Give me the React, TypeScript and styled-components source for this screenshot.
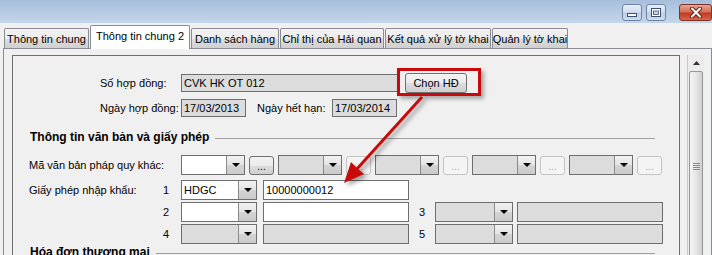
import styled, { createGlobalStyle } from "styled-components";

const GlobalStyle = createGlobalStyle`
  html, body {
    margin: 0;
    padding: 0;
  }
  body {
    width: 712px;
    height: 255px;
    overflow: hidden;
    background: #f0f0f0;
    font-family: "Liberation Sans", Arial, sans-serif;
    font-size: 11px;
    color: #000;
  }
`;

const tabs = [
  { label: "Thông tin chung", width: 85 },
  { label: "Thông tin chung 2", width: 100, active: true },
  { label: "Danh sách hàng", width: 88 },
  { label: "Chỉ thị của Hải quan", width: 104 },
  { label: "Kết quả xử lý tờ khai", width: 106 },
  { label: "Quản lý tờ khai", width: 76 },
];

const Window = styled.div`
  position: relative;
  width: 712px;
  height: 255px;
  overflow: hidden;
  background: #f0f0f0;
`;

const TitleBar = styled.div`
  height: 23px;
  background: linear-gradient(#a7bedb, #c4d6eb);
  display: flex;
  justify-content: flex-end;
  align-items: flex-start;
  padding-top: 4px;
  box-sizing: border-box;
  gap: 4px;
`;

const CaptionButton = styled.div<{ $close?: boolean; $w: number; $ml?: number }>`
  width: ${(p) => p.$w}px;
  height: 17px;
  box-sizing: border-box;
  border: 1px solid ${(p) => (p.$close ? "#7d3326" : "#6f84a3")};
  border-radius: 3px;
  margin-left: ${(p) => p.$ml ?? 0}px;
  background: ${(p) =>
    p.$close
      ? "linear-gradient(#e7a595, #d46f58 45%, #c2391f 55%, #d8674c)"
      : "linear-gradient(#e6eef8, #d2dff0 45%, #bccfe7 55%, #cddcef)"};
  display: flex;
  align-items: center;
  justify-content: center;
`;

const TabStrip = styled.div`
  display: flex;
  align-items: flex-end;
  height: 25px;
  padding-left: 4px;
  gap: 1px;
  position: relative;
  z-index: 1;
`;

const Tab = styled.div<{ $active?: boolean; $w: number }>`
  width: ${(p) => p.$w}px;
  height: ${(p) => (p.$active ? 24 : 20)}px;
  margin-bottom: ${(p) => (p.$active ? -1 : 0)}px;
  box-sizing: border-box;
  border: 1px solid #898c95;
  border-bottom: none;
  border-radius: 2px 2px 0 0;
  background: ${(p) =>
    p.$active ? "#ffffff" : "linear-gradient(#f3f3f3, #ebebeb 50%, #dddddd 51%, #cfcfcf)"};
  display: flex;
  align-items: center;
  justify-content: center;
  padding-bottom: ${(p) => (p.$active ? 3 : 0)}px;
  white-space: nowrap;
`;

const TabPage = styled.div`
  margin-left: 3px;
  border: 1px solid #898c95;
  border-bottom: none;
  height: 220px;
  display: flex;
  align-items: flex-start;
  padding-top: 6px;
  box-sizing: border-box;
`;

const Panel = styled.div`
  margin-left: 8px;
  width: 668px;
  height: 230px;
  box-sizing: border-box;
  border: 1px solid #6e6e6e;
  padding-top: 17px;
  display: flex;
  flex-direction: column;
`;

const ScrollBar = styled.div`
  margin-left: 7px;
  width: 17px;
  height: 230px;
  box-sizing: border-box;
  border-left: 1px solid #c9c9c9;
  background: #ececec;
  display: flex;
  flex-direction: column;
  align-items: center;
`;

const ScrollArrow = styled.div`
  height: 16px;
  display: flex;
  align-items: center;
  justify-content: center;
`;

const Thumb = styled.div`
  width: 14px;
  flex: 1;
  box-sizing: border-box;
  border: 1px solid #979797;
  border-radius: 2px;
  background: linear-gradient(90deg, #f4f4f4, #e6e6e6 50%, #cfcfcf);
  display: flex;
  justify-content: center;
  padding-top: 90px;
`;

const Row = styled.div<{ $mt?: number; $pl?: number }>`
  display: flex;
  align-items: center;
  height: 20px;
  margin-top: ${(p) => p.$mt ?? 0}px;
  padding-left: ${(p) => p.$pl ?? 16}px;
`;

const Label = styled.div<{ $w: number; $pl?: number }>`
  width: ${(p) => p.$w}px;
  padding-left: ${(p) => p.$pl ?? 0}px;
  box-sizing: border-box;
  flex-shrink: 0;
  white-space: nowrap;
`;

const Num = styled.div<{ $w: number; $center?: boolean }>`
  width: ${(p) => p.$w}px;
  flex-shrink: 0;
  text-align: ${(p) => (p.$center ? "center" : "left")};
`;

const Box = styled.div<{ $w: number; $h?: number; $off?: boolean; $ml?: number }>`
  width: ${(p) => p.$w}px;
  height: ${(p) => p.$h ?? 20}px;
  margin-left: ${(p) => p.$ml ?? 0}px;
  flex-shrink: 0;
  box-sizing: border-box;
  border: 1px solid #6e6e6e;
  background: ${(p) => (p.$off ? "#dcdcdc" : "#ffffff")};
  padding-left: 2px;
  display: flex;
  align-items: center;
  white-space: nowrap;
`;

const Combo = styled.div<{ $w: number; $off?: boolean; $ml?: number }>`
  width: ${(p) => p.$w}px;
  height: 20px;
  margin-left: ${(p) => p.$ml ?? 0}px;
  flex-shrink: 0;
  box-sizing: border-box;
  border: 1px solid #6e6e6e;
  background: ${(p) => (p.$off ? "#dcdcdc" : "#ffffff")};
  display: flex;
`;

const ComboText = styled.div`
  flex: 1;
  padding-left: 2px;
  display: flex;
  align-items: center;
`;

const DropButton = styled.div`
  width: 17px;
  border-left: 1px solid #8a8a8a;
  background: linear-gradient(#f2f2f2, #e4e4e4 50%, #d4d4d4 51%, #cacaca);
  display: flex;
  align-items: center;
  justify-content: center;
`;

const Caret = styled.div`
  width: 0;
  height: 0;
  border-left: 4px solid transparent;
  border-right: 4px solid transparent;
  border-top: 4px solid #000;
`;

const DotsButton = styled.div<{ $off?: boolean }>`
  width: 25px;
  height: 19px;
  margin-left: 4px;
  flex-shrink: 0;
  box-sizing: border-box;
  border: 1px solid ${(p) => (p.$off ? "#c4c4c4" : "#707070")};
  border-radius: 3px;
  background: ${(p) =>
    p.$off ? "#f4f4f4" : "linear-gradient(#f3f3f3, #ebebeb 50%, #dddddd 51%, #cfcfcf)"};
  color: ${(p) => (p.$off ? "#a8a8a8" : "#000")};
  display: flex;
  align-items: flex-end;
  justify-content: center;
  font-size: 10px;
  line-height: 14px;
`;

const Button = styled.div`
  width: 62px;
  height: 20px;
  margin-left: 7px;
  box-sizing: border-box;
  border: 1px solid #707070;
  border-radius: 3px;
  background: linear-gradient(#f3f3f3, #ebebeb 50%, #dddddd 51%, #cfcfcf);
  display: flex;
  align-items: center;
  justify-content: center;
`;

const Section = styled.div<{ $mt: number }>`
  display: flex;
  align-items: center;
  height: 14px;
  margin-top: ${(p) => p.$mt}px;
  padding-left: 17px;
  padding-right: 24px;
  font-size: 12px;
  font-weight: bold;
  white-space: nowrap;
`;

const Rule = styled.div`
  flex: 1;
  height: 1px;
  margin-left: 6px;
  margin-top: 2px;
  background: #a0a0a0;
`;

const Highlight = styled.div`
  position: absolute;
  left: 397px;
  top: 68px;
  width: 84px;
  height: 28px;
  box-sizing: border-box;
  border: 3px solid #c80a0a;
  box-shadow: 3px 3px 4px rgba(0, 0, 0, 0.3);
  pointer-events: none;
`;

const Overlay = styled.svg`
  position: absolute;
  left: 0;
  top: 0;
  pointer-events: none;
  filter: drop-shadow(3px 3px 2px rgba(0, 0, 0, 0.35));
`;

const Dropdown = ({ w, off, text }: { w: number; off?: boolean; text?: string }) => (
  <Combo $w={w} $off={off}>
    <ComboText>{text}</ComboText>
    <DropButton>
      <Caret />
    </DropButton>
  </Combo>
);

const ComboSet = ({ off }: { off?: boolean }) => (
  <>
    <Combo $w={64} $off={off} $ml={4}>
      <ComboText />
      <DropButton>
        <Caret />
      </DropButton>
    </Combo>
    <DotsButton $off={off}>...</DotsButton>
  </>
);

export default function App() {
  return (
    <Window>
      <GlobalStyle />
      <TitleBar>
        <CaptionButton $w={20}>
          <svg width="10" height="8" viewBox="0 0 10 8">
            <rect x="0.5" y="4.5" width="9" height="3" fill="#fff" stroke="#3c4f6b" />
          </svg>
        </CaptionButton>
        <CaptionButton $w={20}>
          <svg width="10" height="9" viewBox="0 0 10 9">
            <rect x="0.5" y="0.5" width="9" height="8" fill="#fff" stroke="#3c4f6b" />
            <rect x="2.5" y="3" width="5" height="3.5" fill="#c9d7ea" stroke="#3c4f6b" strokeWidth="0.8" />
          </svg>
        </CaptionButton>
        <CaptionButton $close $w={33} $ml={9}>
          <svg width="14" height="11" viewBox="0 0 14 11">
            <path d="M3 1.5 L11 9.5 M11 1.5 L3 9.5" stroke="#6b2418" strokeWidth="4" strokeLinecap="round" />
            <path d="M3 1.5 L11 9.5 M11 1.5 L3 9.5" stroke="#fff" strokeWidth="2" strokeLinecap="round" />
          </svg>
        </CaptionButton>
      </TitleBar>

      <TabStrip>
        {tabs.map((t) => (
          <Tab key={t.label} $w={t.width} $active={t.active}>
            {t.label}
          </Tab>
        ))}
      </TabStrip>

      <TabPage>
        <Panel>
          <Row $pl={87}>
            <Label $w={81}>Số hợp đồng:</Label>
            <Box $w={217} $h={18} $off>
              CVK HK OT 012
            </Box>
            <Button>Chọn HĐ</Button>
          </Row>
          <Row $pl={87} $mt={5}>
            <Label $w={81}>Ngày hợp đồng:</Label>
            <Box $w={65} $h={18} $off>
              17/03/2013
            </Box>
            <Label $w={86} $pl={11}>
              Ngày hết hạn:
            </Label>
            <Box $w={65} $h={18} $off>
              17/03/2014
            </Box>
          </Row>

          <Section $mt={12}>
            Thông tin văn bản và giấy phép
            <Rule />
          </Section>

          <Row $mt={11}>
            <Label $w={152}>Mã văn bản pháp quy khác:</Label>
            <Dropdown w={64} />
            <DotsButton>...</DotsButton>
            <ComboSet off />
            <ComboSet off />
            <ComboSet off />
            <ComboSet off />
          </Row>

          <Row $mt={5}>
            <Label $w={134}>Giấy phép nhập khẩu:</Label>
            <Num $w={18}>1</Num>
            <Dropdown w={76} text="HDGC" />
            <Box $w={146} $ml={6}>
              10000000012
            </Box>
          </Row>

          <Row $mt={2}>
            <Label $w={134} />
            <Num $w={18}>2</Num>
            <Dropdown w={76} />
            <Box $w={146} $ml={6} />
            <Num $w={26} $center>
              3
            </Num>
            <Dropdown w={78} off />
            <Box $w={146} $ml={4} $off />
          </Row>

          <Row $mt={2}>
            <Label $w={134} />
            <Num $w={18}>4</Num>
            <Dropdown w={76} off />
            <Box $w={146} $ml={6} $off />
            <Num $w={26} $center>
              5
            </Num>
            <Dropdown w={78} off />
            <Box $w={146} $ml={4} $off />
          </Row>

          <Section $mt={1}>
            Hóa đơn thương mại
            <Rule />
          </Section>
        </Panel>

        <ScrollBar>
          <ScrollArrow>
            <svg width="7" height="4" viewBox="0 0 7 4">
              <path d="M0 4 L3.5 0 L7 4 Z" fill="#333" />
            </svg>
          </ScrollArrow>
          <Thumb>
            <svg width="7" height="8" viewBox="0 0 7 8">
              <path d="M0 1.5 H7 M0 3.5 H7 M0 5.5 H7 M0 7.5 H7" stroke="#8a8a8a" strokeWidth="1" />
            </svg>
          </Thumb>
        </ScrollBar>
      </TabPage>

      <Highlight />
      <Overlay width="712" height="255" viewBox="0 0 712 255">
        <line x1="422" y1="97" x2="356" y2="170" stroke="#c80a0a" strokeWidth="3" />
        <polygon points="344,183 364,174 357,168 351,162" fill="#c80a0a" />
      </Overlay>
    </Window>
  );
}
